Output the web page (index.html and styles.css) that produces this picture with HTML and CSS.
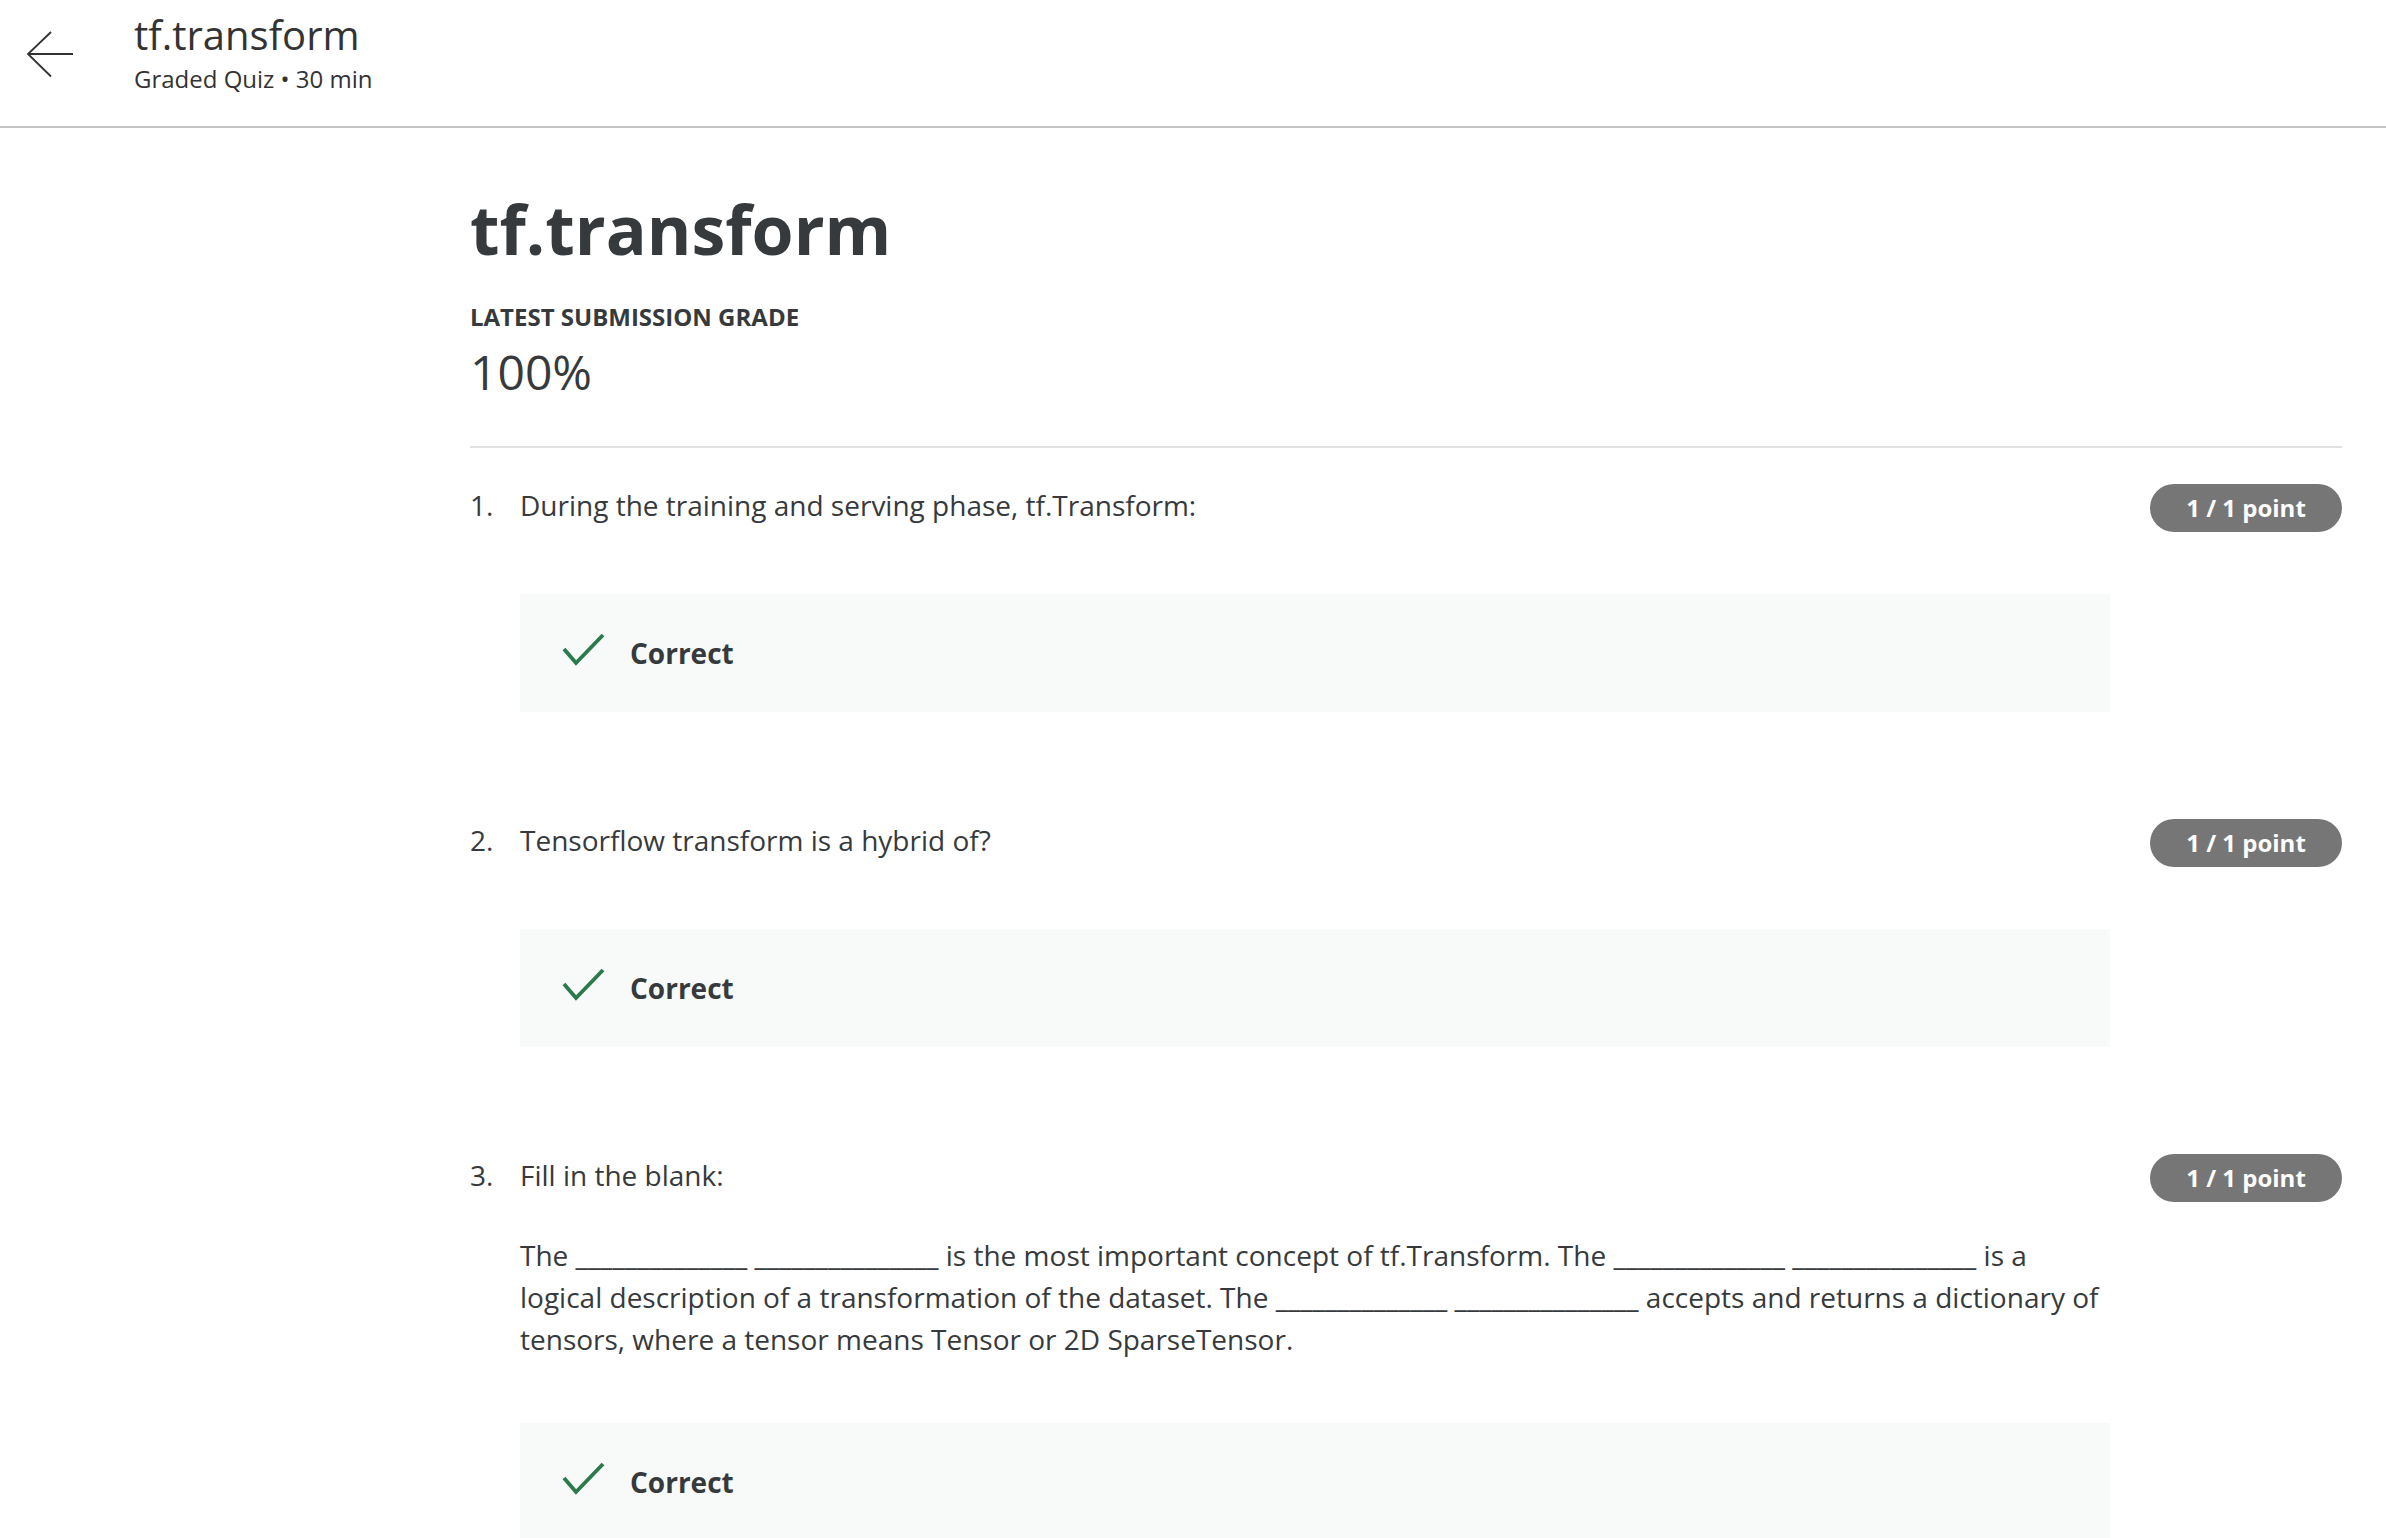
FILE: index.html
```html
<!DOCTYPE html>
<html lang="en">
<head>
<meta charset="utf-8">
<title>tf.transform</title>
<link rel="stylesheet" href="styles.css">
</head>
<body>
<header class="topbar">
  <a class="back" href="#" aria-label="Back">
    <svg width="48" height="48" viewBox="0 0 48 48" aria-hidden="true">
      <path d="M47 24H2M25 2L2 24l23 22.5" fill="none" stroke="#333" stroke-width="1.8"/>
    </svg>
  </a>
  <div class="topbar-text">
    <div class="topbar-title">tf.transform</div>
    <div class="topbar-sub">Graded Quiz • 30 min</div>
  </div>
</header>

<main class="main">
  <h1 class="page-title">tf.transform</h1>
  <div class="grade-label">LATEST SUBMISSION GRADE</div>
  <div class="grade-value">100%</div>
  <hr class="divider">

  <section class="question">
    <div class="qnum">1.</div>
    <div class="qbody">
      <div class="qtext">During the training and serving phase, tf.Transform:</div>
      <div class="feedback">
        <svg class="check" width="44" height="34" viewBox="0 0 44 34" aria-hidden="true">
          <polyline points="2,17 14,31 41,3" fill="none" stroke="#2b7a4b" stroke-width="3.8"/>
        </svg>
        <span class="feedback-text">Correct</span>
      </div>
    </div>
    <div class="points">1 / 1 point</div>
  </section>

  <section class="question">
    <div class="qnum">2.</div>
    <div class="qbody">
      <div class="qtext">Tensorflow transform is a hybrid of?</div>
      <div class="feedback">
        <svg class="check" width="44" height="34" viewBox="0 0 44 34" aria-hidden="true">
          <polyline points="2,17 14,31 41,3" fill="none" stroke="#2b7a4b" stroke-width="3.8"/>
        </svg>
        <span class="feedback-text">Correct</span>
      </div>
    </div>
    <div class="points">1 / 1 point</div>
  </section>

  <section class="question">
    <div class="qnum">3.</div>
    <div class="qbody">
      <div class="qtext">Fill in the blank:</div>
      <p class="prompt">The ______________ _______________ is the most important concept of tf.Transform. The ______________ _______________ is a logical description of a transformation of the dataset. The ______________ _______________ accepts and returns a dictionary of tensors, where a tensor means Tensor or 2D SparseTensor.</p>
      <div class="feedback feedback-after-prompt">
        <svg class="check" width="44" height="34" viewBox="0 0 44 34" aria-hidden="true">
          <polyline points="2,17 14,31 41,3" fill="none" stroke="#2b7a4b" stroke-width="3.8"/>
        </svg>
        <span class="feedback-text">Correct</span>
      </div>
    </div>
    <div class="points">1 / 1 point</div>
  </section>
</main>
</body>
</html>
```

FILE: styles.css
```css
html, body {
  margin: 0;
  padding: 0;
  background: #ffffff;
}

body {
  font-family: "Open Sans", "Noto Sans", "Liberation Sans", sans-serif;
  color: #373a3c;
  overflow: hidden;
}

.topbar {
  display: flex;
  align-items: flex-start;
  height: 126px;
  border-bottom: 2px solid #c4c4c4;
  box-sizing: content-box;
}

.back {
  display: block;
  margin: 30px 0 0 26px;
  width: 48px;
  height: 48px;
}

.back svg {
  display: block;
}

.topbar-text {
  margin-left: 60px;
  padding-top: 10px;
}

.topbar-title {
  font-size: 40px;
  line-height: 50px;
  color: #333333;
}

.topbar-sub {
  font-size: 24px;
  line-height: 32px;
  margin-top: 3px;
  color: #333333;
}

.main {
  padding: 60px 44px 0 470px;
}

.page-title {
  margin: 0;
  font-size: 68px;
  line-height: 82px;
  font-weight: 700;
  color: #373a3c;
}

.grade-label {
  margin-top: 32px;
  font-size: 24px;
  line-height: 30px;
  font-weight: 700;
  color: #373a3c;
}

.grade-value {
  margin-top: 10px;
  font-size: 48px;
  line-height: 60px;
  font-weight: 400;
  color: #373a3c;
}

.divider {
  margin: 44px 0 0;
  border: 0;
  height: 2px;
  background: #e1e1e1;
}

.question {
  display: grid;
  grid-template-columns: 50px 1fr 192px;
  align-items: start;
  margin-top: 36px;
}

.question + .question {
  margin-top: 107px;
}

.qnum,
.qtext,
.prompt {
  font-size: 28px;
  line-height: 42px;
  color: #373a3c;
}

.qbody {
  margin-right: 40px;
}

.prompt {
  margin: 38px 0 0;
}

.feedback {
  display: flex;
  align-items: flex-start;
  margin-top: 68px;
  padding: 38px 0 38px 42px;
  background: #f8f9f9;
}

.feedback-after-prompt {
  margin-top: 63px;
}

.check {
  display: block;
  flex: none;
}

.feedback-text {
  margin-left: 24px;
  font-size: 28px;
  line-height: 42px;
  font-weight: 700;
  color: #373a3c;
}

.points {
  width: 192px;
  height: 48px;
  border-radius: 24px;
  background: #767676;
  color: #ffffff;
  font-size: 24px;
  font-weight: 700;
  line-height: 48px;
  text-align: center;
}
```
